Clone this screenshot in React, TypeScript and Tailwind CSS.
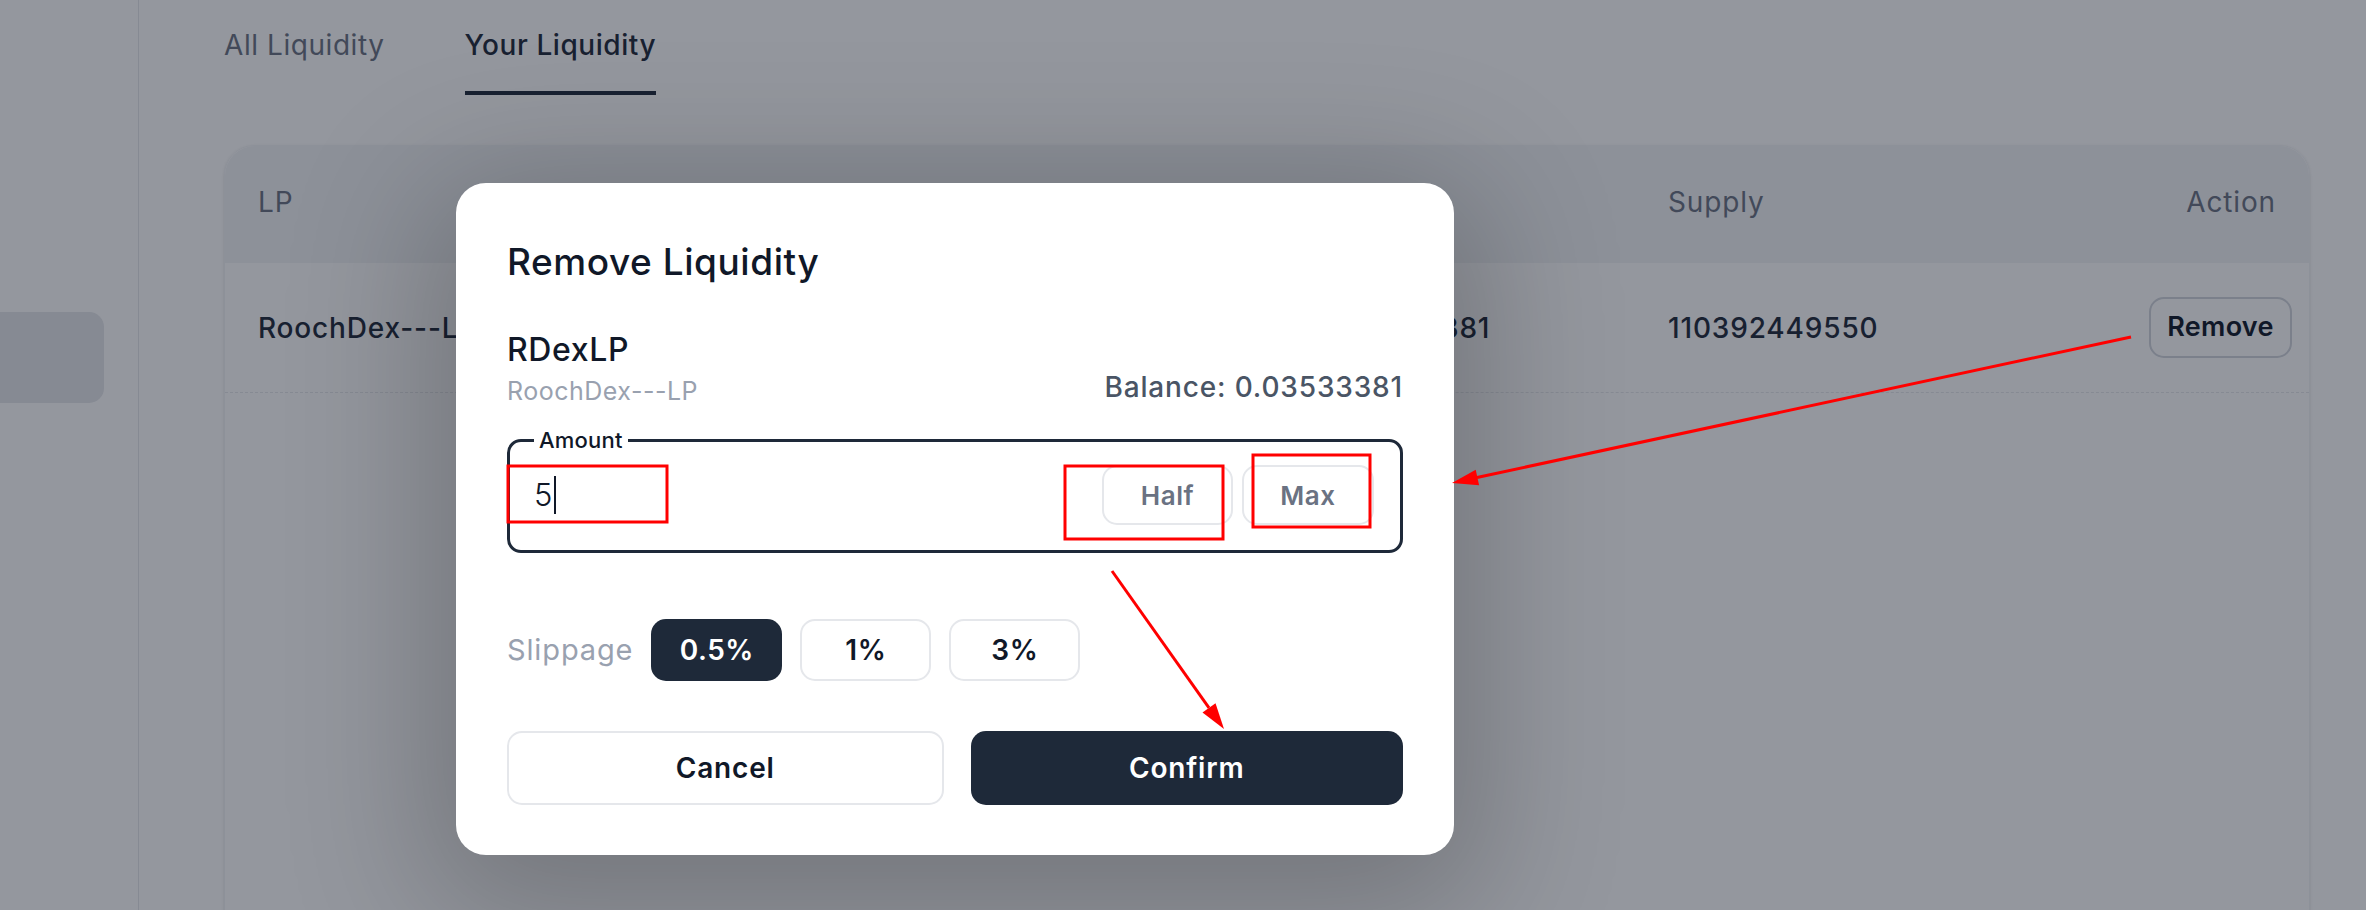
import React from 'react';

const columns = 'grid grid-cols-[544px_520px_346px_1fr_auto] items-center px-[33px]';

function Annotations() {
  return (
    <svg className="pointer-events-none absolute inset-0" width="2366" height="910" viewBox="0 0 2366 910">
      <g fill="none" stroke="#ff0000" strokeWidth="3">
        <rect x="508" y="466" width="159" height="56" />
        <rect x="1065" y="466" width="158" height="73" />
        <rect x="1253" y="455" width="117" height="72" />
        <line x1="2131" y1="337" x2="1477" y2="477.5" />
        <line x1="1112" y1="571" x2="1209" y2="707.8" />
      </g>
      <g fill="#ff0000">
        <polygon points="1452,483 1475.7,469.7 1479.1,485.3" />
        <polygon points="1224,729 1202.5,712.4 1215.5,703.2" />
      </g>
    </svg>
  );
}

function RemoveLiquidityModal() {
  return (
    <div className="absolute left-[456px] top-[183px] w-[998px] rounded-[30px] bg-white px-[51px] pt-[53px] pb-[50px] shadow-[0_30px_140px_30px_rgba(0,0,0,0.22)]">
      <h2 className="text-[37px] leading-[52px] font-medium tracking-[0.015em] text-gray-900">Remove Liquidity</h2>

      <div className="mt-[42px] flex items-end justify-between">
        <div>
          <div className="text-[32px] leading-[40px] font-medium tracking-[0.02em] text-gray-900">RDexLP</div>
          <div className="mt-[5px] text-[25px] leading-[32px] tracking-[0.02em] text-gray-400">RoochDex---LP</div>
        </div>
        <div className="pb-[2px] text-[28px] leading-[36px] font-medium tracking-[0.03em] text-gray-600">
          Balance: 0.03533381
        </div>
      </div>

      {/* amount input */}
      <fieldset className="mt-[19px] rounded-[14px] border-[3px] border-gray-800 pl-[24px] pr-[26px] pt-[11px] pb-[25px]">
        <legend className="px-[5px] text-[22px] leading-[28px] font-medium tracking-[0.01em] text-gray-900">Amount</legend>
        <div className="flex items-center">
          <div className="flex flex-1 items-center text-[31px] leading-[40px] font-light text-gray-900">
            5<span className="ml-[2px] h-[38px] w-[2px] bg-gray-900" />
          </div>
          <div className="flex gap-[9px]">
            <button className="h-[60px] w-[131px] rounded-[15px] border-2 border-gray-200 text-[26px] font-semibold tracking-[0.02em] text-gray-500">
              Half
            </button>
            <button className="h-[60px] w-[132px] rounded-[15px] border-2 border-gray-200 text-[26px] font-semibold tracking-[0.02em] text-gray-500">
              Max
            </button>
          </div>
        </div>
      </fieldset>

      {/* slippage */}
      <div className="mt-[66px] flex items-center gap-[18px]">
        <span className="text-[29px] leading-[36px] tracking-[0.03em] text-gray-400">Slippage</span>
        <button className="h-[62px] w-[131px] rounded-[15px] bg-gray-800 text-[28px] font-semibold tracking-[0.02em] text-white">0.5%</button>
        <button className="h-[62px] w-[131px] rounded-[15px] border-2 border-gray-200 text-[28px] font-semibold tracking-[0.02em] text-gray-900">1%</button>
        <button className="h-[62px] w-[131px] rounded-[15px] border-2 border-gray-200 text-[28px] font-semibold tracking-[0.02em] text-gray-900">3%</button>
      </div>

      <div className="mt-[50px] flex gap-[27px]">
        <button className="h-[74px] flex-1 rounded-[15px] border-2 border-gray-200 text-[28px] font-semibold tracking-[0.03em] text-gray-900">
          Cancel
        </button>
        <button className="h-[74px] flex-1 rounded-[15px] bg-gray-800 text-[28px] font-semibold tracking-[0.03em] text-white">
          Confirm
        </button>
      </div>
    </div>
  );
}

export default function App() {
  return (
    <div className="relative h-[910px] w-full overflow-hidden bg-white font-[Inter,sans-serif]">
      <div className="flex h-full">
        {/* Sidebar */}
        <aside className="w-[139px] shrink-0 border-r border-gray-200">
          <div className="mt-[312px] h-[91px] w-[104px] rounded-r-[15px] bg-gray-200" />
        </aside>

        <main className="flex-1 pl-[85px] pr-[56px]">
          {/* Tabs */}
          <div className="flex gap-[80px]">
            <button className="pt-[27px] pb-[32px] text-[28px] leading-[36px] tracking-[0.02em] text-gray-500">All Liquidity</button>
            <button className="border-b-4 border-gray-800 pt-[27px] pb-[28px] text-[28px] leading-[36px] font-medium tracking-[0.02em] text-gray-800">
              Your Liquidity
            </button>
          </div>

          {/* Table */}
          <div className="mt-[50px] h-[900px] rounded-t-[30px] border border-gray-100 shadow-sm">
            <div className={`${columns} h-[117px] rounded-t-[30px] bg-gray-100 pb-[5px] text-[28px] tracking-[0.03em] text-gray-500`}>
              <div>LP</div>
              <div>Pair</div>
              <div>Balance</div>
              <div>Supply</div>
              <div className="text-right">Action</div>
            </div>
            <div className={`${columns} h-[130px] border-b border-dashed border-gray-200 text-[28px] font-medium tracking-[0.03em] text-gray-800`}>
              <div>RoochDex---LP</div>
              <div>RDexLP</div>
              <div>0.03533381</div>
              <div>110392449550</div>
              <div className="flex justify-end">
                <button className="-mr-[16px] h-[61px] w-[143px] rounded-[15px] border-2 border-gray-300 text-[27px] font-semibold tracking-[0.01em] text-gray-900">
                  Remove
                </button>
              </div>
            </div>
          </div>
        </main>
      </div>

      {/* dimmed backdrop */}
      <div className="absolute inset-0 bg-[#111827]/45" />

      <RemoveLiquidityModal />
      <Annotations />
    </div>
  );
}
